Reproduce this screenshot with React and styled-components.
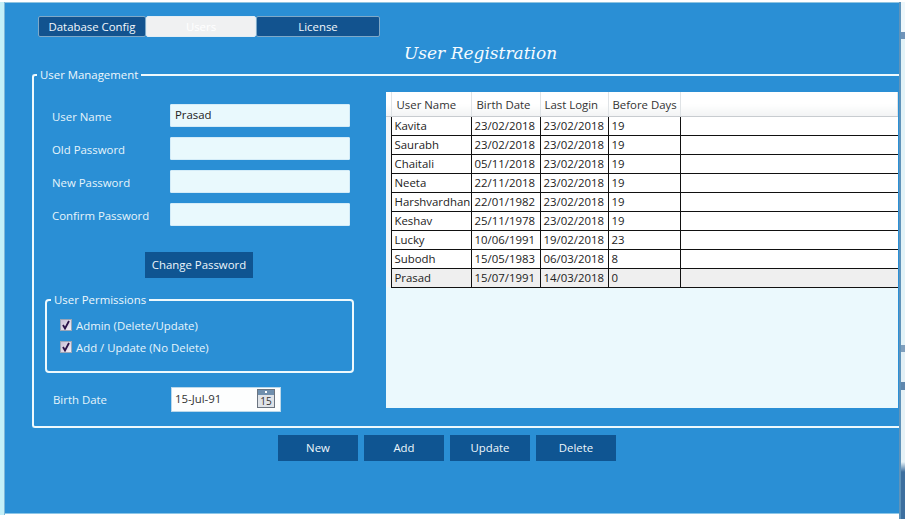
import React from "react";
import styled, { createGlobalStyle } from "styled-components";

const Global = createGlobalStyle`
  html, body { margin: 0; padding: 0; background: #fff; }
  body { font-family: "Open Sans", "Noto Sans", "Liberation Sans", sans-serif; font-size: 11.4px; }
  * { box-sizing: border-box; }
`;

const Shell = styled.div`
  width: 905px;
  height: 519px;
  padding-top: 2px;
  display: flex;
  align-items: flex-start;
  overflow: hidden;
  background: #fff;
`;

const LeftEdge = styled.div`
  width: 5px;
  height: 513px;
  background: #c4f0f8;
  border-right: 1px solid #7fb8d8;
`;

const RightEdge = styled.div`
  width: 6px;
  height: 517px;
  border-left: 2px solid #5f93ba;
  background: linear-gradient(
    #eef7fb 0 30px,
    #6f93b8 30px 37px,
    #e3f3f8 37px 343px,
    #7f9fbd 343px 350px,
    #e3f0f6 350px 380px,
    #5f87ad 380px 388px,
    #e6f2f7 388px 460px,
    #3d6f9f 470px 517px
  );
`;

const Main = styled.main`
  width: 894px;
  height: 512px;
  padding-top: 13px;
  background: #2a8fd5;
  border-top: 1px solid #8fc4e0;
  border-bottom: 1px solid #8cc6e8;
`;

const TabBar = styled.nav`
  display: flex;
  height: 21px;
  margin-left: 33px;
`;

const Tab = styled.div`
  width: ${(p) => p.$width}px;
  display: flex;
  align-items: center;
  justify-content: center;
  font-size: 11.4px;
  color: ${(p) => (p.$active ? "#fff" : "#f2f8fc")};
  background: ${(p) => (p.$active ? "#f0f1f2" : "#12538f")};
  border: 1px solid ${(p) => (p.$active ? "#e4eef4" : "#7fa9c8")};
  border-radius: 2px;
`;

const Title = styled.h1`
  height: 30px;
  margin: 0;
  padding: 5px 0 0 399px;
  font-family: "DejaVu Serif", serif;
  font-style: italic;
  font-weight: 400;
  font-size: 17px;
  line-height: 22px;
  color: #f4fbff;
`;

const GroupBox = styled.fieldset`
  width: 867px;
  height: 361px;
  margin: 0 0 0 27px;
  padding: 0;
  display: flex;
  border: 2px solid #eef9fd;
  border-right: none;
  border-radius: 3px 0 0 3px;
`;

const Legend = styled.legend`
  margin-left: ${(p) => p.$offset}px;
  padding: 0 3px;
  font-size: 11.4px;
  line-height: 16px;
  color: #eef7fc;
`;

const Columns = styled.div`
  display: flex;
  width: 100%;
  padding-top: 9px;
`;

const FormColumn = styled.section`
  width: 352px;
  padding-top: 12px;
`;

const FieldList = styled.div`
  display: flex;
  flex-direction: column;
  gap: 10px;
  padding-left: 18px;
`;

const Field = styled.label`
  display: flex;
  align-items: center;
  height: 23px;
`;

const FieldLabel = styled.span`
  width: 118px;
  padding-top: 1px;
  color: #e6f4fb;
  white-space: nowrap;
`;

const TextInput = styled.input`
  width: 180px;
  height: 23px;
  padding: 0 4px 2px;
  border: 1px solid #d4ecf8;
  border-radius: 1px;
  background: #e9f9fd;
  color: #222;
  font: 11.4px "Open Sans", sans-serif;
  outline: none;
`;

const ActionButton = styled.button`
  display: block;
  width: ${(p) => p.$width}px;
  height: 26px;
  margin: ${(p) => p.$margin || 0};
  padding: 0 0 1px;
  border: none;
  background: #0f5592;
  color: #eef7fc;
  font: 11.4px "Open Sans", sans-serif;
`;

const Permissions = styled.fieldset`
  width: 309px;
  height: 81px;
  margin: 14px 0 0 11px;
  padding: 6px 0 0 13px;
  border: 2px solid #eef9fd;
  border-radius: 4px;
`;

const CheckRow = styled.label`
  display: flex;
  align-items: center;
  gap: 4px;
  height: 22px;
  color: #e6f4fb;
`;

const CheckBox = styled.span`
  width: 12px;
  height: 12px;
  display: flex;
  align-items: center;
  justify-content: center;
  background: linear-gradient(135deg, #c9bfd6, #f3eef5);
  border: 1px solid #9aa6b8;
`;

const BirthRow = styled.div`
  display: flex;
  align-items: center;
  margin: 14px 0 0 19px;
`;

const BirthLabel = styled.span`
  width: 118px;
  padding-bottom: 1px;
  color: #e6f4fb;
`;

const DateBox = styled.div`
  width: 110px;
  height: 25px;
  padding: 0 5px 2px 3px;
  display: flex;
  align-items: center;
  justify-content: space-between;
  background: #fdfefe;
  border: 1px solid #bcd8ea;
  color: #333;
`;

const GridPanel = styled.section`
  width: 512px;
  height: 316px;
  background: #ebf9fd;
  overflow: hidden;
`;

const Table = styled.table`
  width: 100%;
  border-collapse: collapse;
  table-layout: fixed;
  font-size: 11.4px;
  color: #222;
`;

const HeadCell = styled.th`
  height: 24px;
  padding: 1px 0 0 ${(p) => p.$pad}px;
  font-weight: 400;
  text-align: left;
  white-space: nowrap;
  background: linear-gradient(#fff 50%, #f2f3f4);
  border-right: 1px solid #dfe3e6;
  border-bottom: 1px solid #c8ccd0;
  color: #333;
`;

const Row = styled.tr`
  background: ${(p) => (p.$selected ? "#efefef" : "#fff")};
`;

const Cell = styled.td`
  height: 19px;
  padding: 0 0 1px 3px;
  white-space: nowrap;
  overflow: hidden;
  border: 1px solid #111;
  border-top: none;
  line-height: 17px;
  &:last-child { border-right: none; }
`;

const Column = styled.col`
  width: ${(p) => p.$width}px;
`;

const Gutter = styled.td`
  padding: 0;
  border: none;
  background: #f5f6f7;
`;

const Actions = styled.div`
  display: flex;
  gap: 6px;
  margin: 7px 0 0 273px;
`;

const Check = () => (
  <svg width="10" height="10" viewBox="0 0 10 10">
    <path d="M2 5 L4 8.5 L8 1" fill="none" stroke="#2a1248" strokeWidth="1.8" />
  </svg>
);

const Calendar = () => (
  <svg width="18" height="19" viewBox="0 0 18 19">
    <rect x="0.5" y="0.5" width="17" height="18" fill="#dfe3e8" stroke="#6b7480" />
    <rect x="1" y="1" width="16" height="5" fill="#6f8fae" />
    <rect x="8" y="2" width="2" height="2" fill="#fff" />
    <text x="9" y="16" textAnchor="middle" fontSize="10" fontFamily="Open Sans" fill="#333">15</text>
  </svg>
);

const users = [
  ["Kavita", "23/02/2018", "23/02/2018", "19"],
  ["Saurabh", "23/02/2018", "23/02/2018", "19"],
  ["Chaitali", "05/11/2018", "23/02/2018", "19"],
  ["Neeta", "22/11/2018", "23/02/2018", "19"],
  ["Harshvardhan", "22/01/1982", "23/02/2018", "19"],
  ["Keshav", "25/11/1978", "23/02/2018", "19"],
  ["Lucky", "10/06/1991", "19/02/2018", "23"],
  ["Subodh", "15/05/1983", "06/03/2018", "8"],
  ["Prasad", "15/07/1991", "14/03/2018", "0"],
];

const fields = [
  ["User Name", "Prasad"],
  ["Old Password", ""],
  ["New Password", ""],
  ["Confirm Password", ""],
];

const App = () => (
  <Shell>
    <Global />
    <LeftEdge />
    <Main>
      <TabBar>
        <Tab $width={108}>Database Config</Tab>
        <Tab $width={110} $active>Users</Tab>
        <Tab $width={124}>License</Tab>
      </TabBar>
      <Title>User Registration</Title>
      <GroupBox>
        <Legend $offset={3}>User Management</Legend>
        <Columns>
          <FormColumn>
            <FieldList>
              {fields.map(([label, value]) => (
                <Field key={label}>
                  <FieldLabel>{label}</FieldLabel>
                  <TextInput defaultValue={value} />
                </Field>
              ))}
            </FieldList>
            <ActionButton $width={108} $margin="26px 0 0 111px">Change Password</ActionButton>
            <Permissions>
              <Legend $offset={-9}>User Permissions</Legend>
              <CheckRow><CheckBox><Check /></CheckBox>Admin (Delete/Update)</CheckRow>
              <CheckRow><CheckBox><Check /></CheckBox>Add / Update (No Delete)</CheckRow>
            </Permissions>
            <BirthRow>
              <BirthLabel>Birth Date</BirthLabel>
              <DateBox>15-Jul-91<Calendar /></DateBox>
            </BirthRow>
          </FormColumn>
          <GridPanel>
            <Table>
              <colgroup>
                <Column $width={5} />
                <Column $width={80} />
                <Column $width={69} />
                <Column $width={68} />
                <Column $width={72} />
                <col />
              </colgroup>
              <thead>
                <tr>
                  <HeadCell $pad={0} />
                  <HeadCell $pad={5}>User Name</HeadCell>
                  <HeadCell $pad={5}>Birth Date</HeadCell>
                  <HeadCell $pad={4}>Last Login</HeadCell>
                  <HeadCell $pad={4}>Before Days</HeadCell>
                  <HeadCell $pad={0} />
                </tr>
              </thead>
              <tbody>
                {users.map((u) => (
                  <Row key={u[0]} $selected={u[0] === "Prasad"}>
                    <Gutter />
                    {u.map((v, i) => <Cell key={i}>{v}</Cell>)}
                    <Cell />
                  </Row>
                ))}
              </tbody>
            </Table>
          </GridPanel>
        </Columns>
      </GroupBox>
      <Actions>
        <ActionButton $width={80}>New</ActionButton>
        <ActionButton $width={80}>Add</ActionButton>
        <ActionButton $width={80}>Update</ActionButton>
        <ActionButton $width={80}>Delete</ActionButton>
      </Actions>
    </Main>
    <RightEdge />
  </Shell>
);

export default App;
